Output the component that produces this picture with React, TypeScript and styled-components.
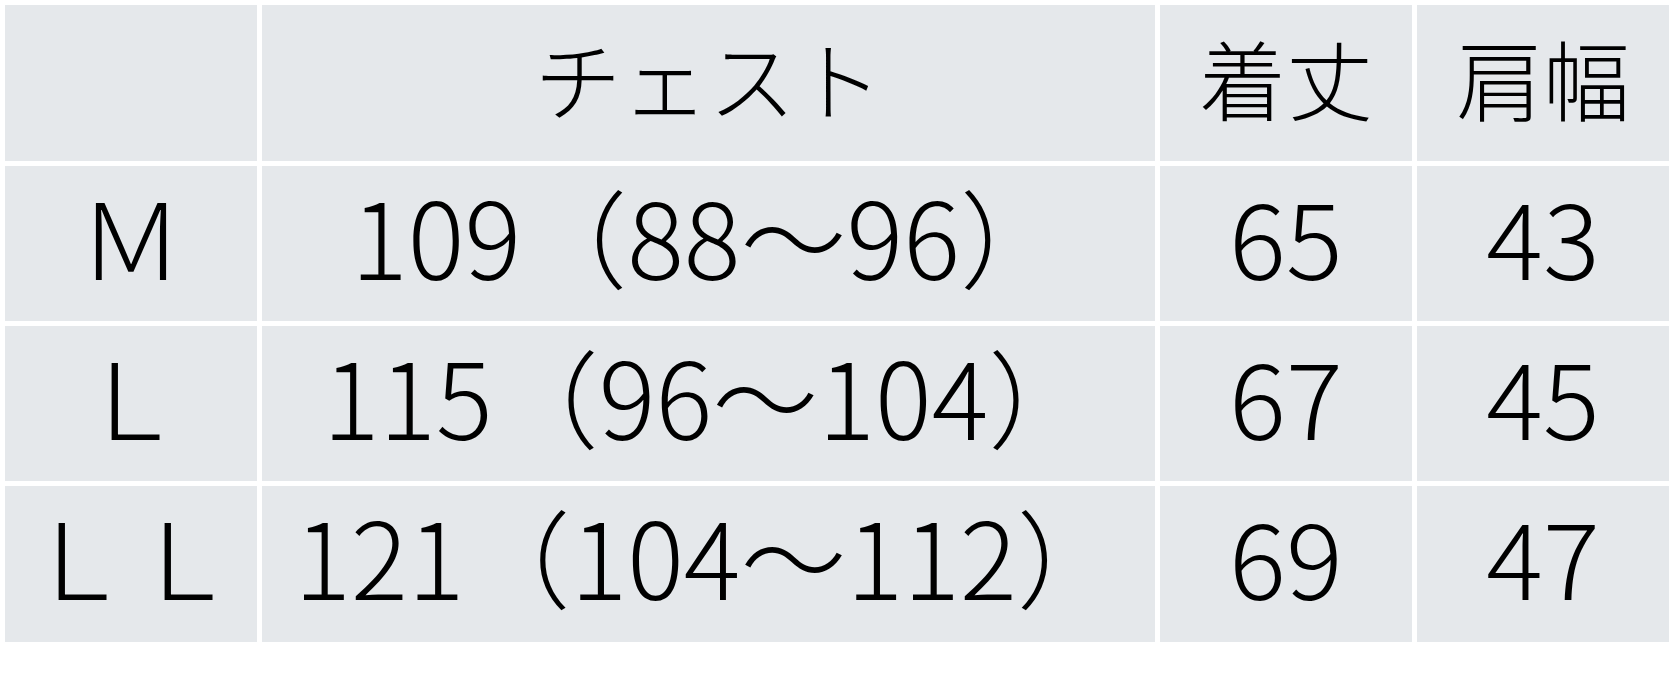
import React from "react";
import styled, { createGlobalStyle } from "styled-components";

const GlobalStyle = createGlobalStyle`
  html, body {
    margin: 0;
    padding: 0;
    background: #ffffff;
  }
  body {
    font-family: "Noto Sans CJK JP", "Noto Sans", sans-serif;
    color: #000000;
  }
`;

const Table = styled.div`
  display: grid;
  grid-template-columns: 252px 893px 252px 252px;
  grid-template-rows: 156px 155px 155px 156px;
  column-gap: 5px;
  row-gap: 5px;
  padding: 5px;
  width: max-content;
`;

const Cell = styled.div<{ $head?: boolean }>`
  background: #e5e8eb;
  display: flex;
  align-items: center;
  justify-content: center;
  box-sizing: border-box;
  padding-bottom: ${(p) => (p.$head ? "12px" : "20px")};
  font-family: "Noto Sans CJK JP", sans-serif;
  font-weight: 300;
  font-size: ${(p) => (p.$head ? "87px" : "106px")};
  line-height: 1;
  white-space: nowrap;
  color: #000;
`;

const header = ["", "チェスト", "着丈", "肩幅"];
const rows = [
  ["Ｍ", "109（88〜96）", "65", "43"],
  ["Ｌ", "115（96〜104）", "67", "45"],
  ["ＬＬ", "121（104〜112）", "69", "47"],
];

export default function App() {
  return (
    <>
      <GlobalStyle />
      <Table>
        {header.map((h, i) => (
          <Cell key={`h${i}`} $head>
            {h}
          </Cell>
        ))}
        {rows.map((r, ri) =>
          r.map((c, ci) => <Cell key={`${ri}-${ci}`}>{c}</Cell>)
        )}
      </Table>
    </>
  );
}
